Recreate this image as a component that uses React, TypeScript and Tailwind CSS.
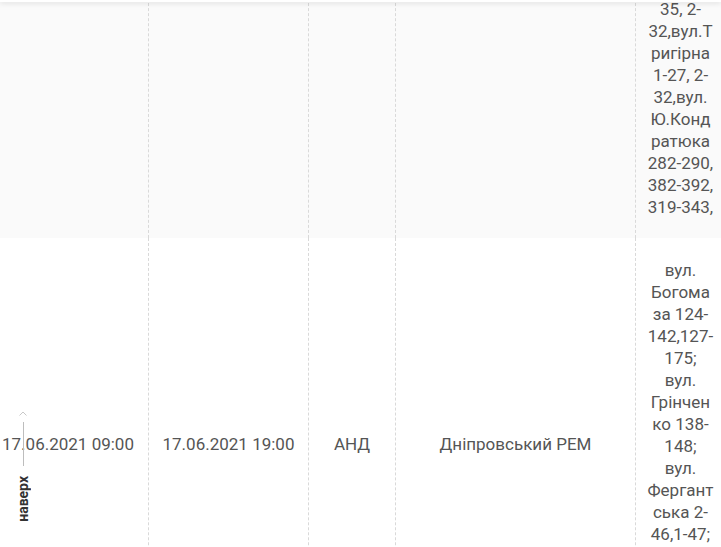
import React from 'react';

const cell = 'flex items-center justify-center text-center';
const dashed = 'border-l border-dashed border-[#d9d9d9]';

const firstRowTail = '35, 2-32,вул.Тригірна 1-27, 2-32,вул. Ю.Кондратюка 282-290, 382-392, 319-343,';

const secondRowStreets = [
  'вул. Богома\u200Bза 124-142,127-175;',
  'вул. Грінченко 138-148;',
  'вул. Фергант\u200Bська 2-46,1-47;',
  'вул. Хотинська 1-25;',
];

export default function App() {
  return (
    <div className="relative h-[547px] w-[721px] overflow-hidden bg-white font-['Roboto',sans-serif] text-[17px] leading-[22px] text-[#555]">
      {/* sticky header edge */}
      <div className="absolute inset-x-0 top-0 z-10 h-[2px] bg-white shadow-[0_1px_5px_rgba(0,0,0,0.18)]" />

      <div className="-ml-[12px] -mt-[2px] w-max">
        {/* previous row, scrolled mostly out of view */}
        <div className="grid h-[240px] grid-cols-[160px_160px_87px_240px_90px] bg-[#fafafa]">
          <div className={cell} />
          <div className={`${cell} ${dashed}`} />
          <div className={`${cell} ${dashed}`} />
          <div className={`${cell} ${dashed}`} />
          <div className={`${dashed} flex justify-center`}>
            <div className="w-[68px] break-words text-center">{firstRowTail}</div>
          </div>
        </div>

        {/* current row */}
        <div className="grid h-[412px] grid-cols-[160px_160px_87px_240px_90px] bg-white">
          <div className={cell}>17.06.2021 09:00</div>
          <div className={`${cell} ${dashed}`}>17.06.2021 19:00</div>
          <div className={`${cell} ${dashed}`}>АНД</div>
          <div className={`${cell} ${dashed}`}>Дніпровський РЕМ</div>
          <div className={`${dashed} flex justify-center pt-[21px]`}>
            <div className="w-[68px] break-words text-center">
              {secondRowStreets.map((s) => (
                <div key={s}>{s}</div>
              ))}
            </div>
          </div>
        </div>
      </div>

      {/* back to top */}
      <button className="absolute left-[13px] top-[411px] flex w-[20px] flex-col items-center">
        <svg width="8" height="5" viewBox="0 0 8 5" fill="none" stroke="#c8c8c8" strokeWidth="1">
          <path d="M0.5 4.5 L4 1 L7.5 4.5" />
        </svg>
        <span className="mt-[6px] block h-[44px] w-px bg-[#bdbdbd]" />
        <span className="mt-[10px] rotate-180 text-[14px] font-bold leading-[16px] text-[#333] [writing-mode:vertical-rl]">
          наверх
        </span>
      </button>
    </div>
  );
}
